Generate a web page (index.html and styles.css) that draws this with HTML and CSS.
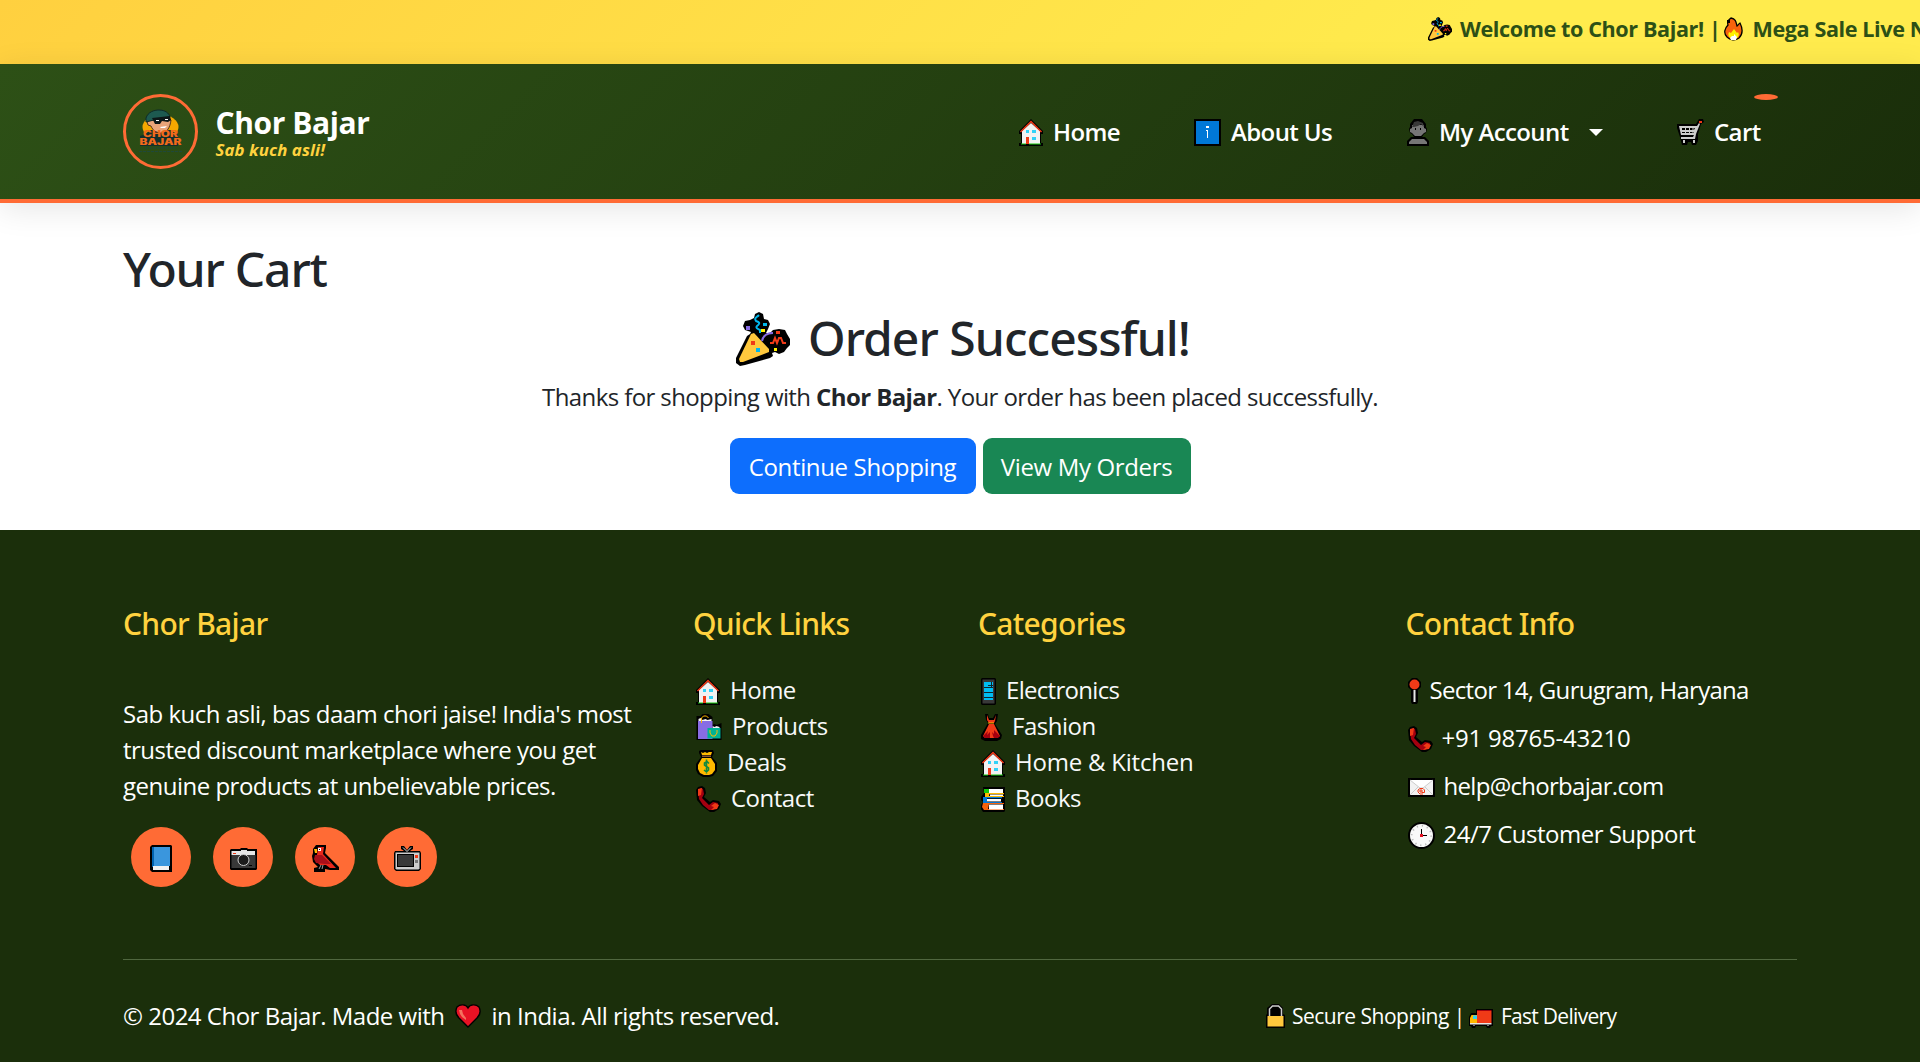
FILE: index.html
```
<!DOCTYPE html>
<html lang="en">
<head>
<meta charset="utf-8">
<title>Chor Bajar - Your Cart</title>
<link rel="stylesheet" href="styles.css">
</head>
<body>
<svg class="sprite" aria-hidden="true">
  <symbol id="party" viewBox="0 0 54 54">
    <path fill="#000" d="M14 8l4-2 1-4 4-2 4 2 1 5 4 1 2 4-2 5-2 4 4 0 3-3 6-1 6 1 2 4 3 5 1 5-4 4-3 4-5 2-4-2-3 1 1 3-3 2L9 53l-5 1-4-3 0-5L11 24l3-2 1-2-6-2-2-4 2-5z"/>
    <path fill="#ffc83d" d="M15 22l3-1 15 16 0 3L7 50l-3 0-1-3z"/>
    <path fill="none" stroke="#00b7eb" stroke-width="2" d="M23 3c-3 3-5 3-3 6 3 1 5 2 1 5-2 2 1 3 3 4v3"/>
    <path fill="none" stroke="#886ce4" stroke-width="2" d="M26 29c1-5 5-8 11-8"/>
    <path fill="none" stroke="#f03a17" stroke-width="2" d="M34 31h3l2-5 2 5 2-5h2l2 5h3"/>
    <path fill="#886ce4" d="M10 14h4v4h-4z"/><path fill="#00b7eb" d="M27 11h4v3h-4zM20 36h4v4h-4z"/>
    <path fill="#f03a17" d="M15 29h4v4h-4zM40 19h4v3h-4z"/><path fill="#fff100" d="M25 17h4v3h-4zM38 36h3v3h-3z"/>
  </symbol>
  <symbol id="fire" viewBox="0 0 19 24">
    <path fill="#f7630c" stroke="#000" stroke-width="1.3" d="M7 1c5 1 5 4 6 8 1 0 1-2 3-3 3 6 3 11-1 15-4 3-9 2-12-1-4-4-2-9 1-12-1-3 0-5 3-7z"/>
    <path fill="#000" d="M3 3h3v3H3z"/>
    <path fill="#fff100" d="M10 12l3 4 1-1c2 3 0 7-4 7s-7-3-5-7l2 1z"/><path fill="#fff" d="M10 17l3 3-1 3H7l-1-2 2-2h2z"/>
  </symbol>
  <symbol id="house" viewBox="0 0 24 27">
    <path d="M12 0l12 12v3h-2v9h2v3H0v-3h2v-9H0v-3z"/>
    <path fill="#f2f2f2" d="M3 12l9-8 9 8v13H3z"/>
    <path fill="none" stroke="#f03a17" stroke-width="1.5" d="M1.500 13L12 2.500 22.500 13"/>
    <path fill="#31d2f7" d="M7 11h3v3H7zM13 11h4v3h-4zM13 18h4v3h-4z"/>
    <path fill="#f03a17" d="M7 18h3v7H7z"/><path fill="#16c60c" d="M2 24.500h5v1H2zM10 24.500h12v1H10z"/>
  </symbol>
  <symbol id="info" viewBox="0 0 27 27">
    <path d="M0 0h27v27H0z"/><path fill="#0078d7" d="M2 2h23v23H2z"/>
    <path fill="#fff" d="M12 7h3v2h-3zM12 11h2v8h-1v-7h-1z"/>
  </symbol>
  <symbol id="person" viewBox="0 0 22 27">
    <path d="M7 0h8l4 5v3l1 2-1 4-2 1-2 3h3l4 4v5H0v-5l4-4h3l-2-3-2-1-1-4 1-2V5z"/>
    <path fill="#767676" d="M5 6h12v3l2 1v3l-2 1-3 3H8l-3-3-2-1v-3l2-1zM5 20h12l3 3v2H2v-2z"/>
    <path fill="#383838" d="M5 8l2-5 4-1 5 2 1 4-3-3-3 2-4 1z"/><path d="M8 9h1v2H8zM13 9h1v2h-1z"/>
  </symbol>
  <symbol id="cart" viewBox="0 0 27 27">
    <path d="M0 5h19l3-5h4l1 3-3 2-3 10v7l-2 4h-4l-1-3h-3l-1 3H5l-1-4-1-4-1-3L0 9z"/>
    <path fill="#ccc" d="M2 7h18l2-3 1 1-4 10-1 5H4v-2h12l1-2H4z"/>
    <path d="M5 9h13l-1 2H5zM5 13h12v1H5z"/><path fill="#ccc" d="M8 8h1v7H8zM12 8h1v7h-1zM15.500 8h1v7h-1z"/>
    <path fill="#f03a17" d="M22 2h3v2h-3z"/><path fill="#ccc" d="M6 21h2v3H6zM16 21h2v3h-2z"/>
  </symbol>
  <symbol id="bags" viewBox="0 0 25 26">
    <path d="M0 2h4l2-2h6l4 3v8l2-1 2 1 5-2v17H0z"/>
    <path fill="#f2f2f2" d="M2 5l2-1 2 2 3-1 2 1 4-1v3H2zM16 12l2 1 2-1 3 1v2h-7z"/>
    <path fill="#886ce4" d="M1.500 7H16v18H1.500z"/><path fill="#00b294" d="M11 14h13v10.500H11z"/>
    <path fill="none" stroke="#ffb900" d="M5 9V4l2-2h3l2 2M13.500 16v3l2 3h3l2-3v-3"/>
  </symbol>
  <symbol id="money" viewBox="0 0 21 27">
    <path d="M3 1l2-1h12l1 3-2 4 5 6v8l-4 5-4 1H7l-5-3-2-4v-6l5-7-2-4z"/>
    <path fill="#ffb900" d="M5 2l2 1 2-1 2 1 2-1 3 0-1 3H6zM6 8h9l4 6v6l-3 4-3 1H8l-4-2-2-4v-4z"/>
    <path fill="#8e562e" d="M6 5.500h9V7H6z"/>
    <path fill="none" stroke="#10893e" stroke-width="1.600" d="M13 13.500l-2-2-2.500 1.500v2l4 3v2L10.500 22 8 20M10.500 9.500v14"/>
  </symbol>
  <symbol id="phone" viewBox="0 0 25 26">
    <path d="M2 1l4-1 3 2 1 5-2 4 6 5 3-2 6 1 2 3-2 5-5 3h-4L6 20 1 14 0 4z"/>
    <path fill="#a4000f" d="M2 4l3-2 2 1 1 5-2 4 7 7 4-3 5 1-1 4-4 3h-4L7 19 3 13z"/>
    <path fill="#f03a17" d="M2 3l4-1-1 7-3 1zM15 20l4-3 4 2-2 4-6 1 3-3z"/>
  </symbol>
  <symbol id="mobile" viewBox="0 0 15 27">
    <path d="M1 0h13l1 1v25l-1 1H1l-1-1V1z"/><path fill="#383838" d="M1.500 1.500h12v24h-12z"/>
    <path fill="#00bcf2" d="M3 4h9v18H3z"/><path stroke="#10252c" d="M3 9.500h9M3 14.500h9M3 19.500h9M7 7.500h5M10.500 4v5"/>
  </symbol>
  <symbol id="dress" viewBox="0 0 21 27">
    <path d="M4 0h3l1 4h4l2-4h3l-1 7-2 3 7 11-1 4-4 2H4l-4-2v-4L7 9 5 6z"/>
    <path fill="#f03a17" d="M6 1l2 5h5l2-5-1 6-1 2H8L6 6zM8 10h5l6 12-3 2H4l-2-2z"/>
    <path fill="#a4000f" d="M2 22l5-5-1 4 3-3v6H4zM11 18l2 2 0-4 6 6-2 2h-4l-1-2z"/><path fill="#ffb900" d="M7 8.500h6v1H7z"/>
  </symbol>
  <symbol id="books" viewBox="0 0 24 25">
    <path d="M2 0h22v24l-1 1H2l-2-3v-4l2-3-2-2v-3l3-4z"/>
    <path fill="#16c60c" d="M3 2h18v1H8v3H3z"/><path fill="#fff" d="M8 2h14v4H8z"/>
    <path fill="#ffb900" d="M4 6h19v1.300H8V9h15v1H4z"/><path fill="#fff" d="M9 7.500h13V9H9z"/>
    <path fill="#0078d7" d="M2 10h19v1.300H6V15h15v1H2z"/><path fill="#fff" d="M6 12h14v2.500H6z"/>
    <path fill="#f7630c" d="M2 16h21v1H8l-1 5 16 0v1H3l-2-3z"/><path fill="#fff" d="M8 17.500h14v5H8z"/>
  </symbol>
  <symbol id="pin" viewBox="0 0 13 27">
    <path d="M4 0h5l4 4v5l-3 3v12l-1 2H4l-1-2V12L0 9V4z"/><circle cx="6.500" cy="6.500" r="5" fill="#f03a17"/><path fill="#e6e6e6" d="M5.500 12h2v12h-2z"/>
  </symbol>
  <symbol id="mail" viewBox="0 0 27 19">
    <path d="M0 0h27v19H0z"/><path fill="#f2f2f2" d="M2 2h23v15H2z"/>
    <path fill="#fff" stroke="#ccc" d="M2 2l10 8h3L25 2M2 17l8-8M25 17l-8-8"/>
    <path fill="none" stroke="#f03a17" d="M15 16h-3l-2-2v-2l2-1.500h3l1.500 1.500v2.500H14v-2.500h-2v2h2"/>
  </symbol>
  <symbol id="clock" viewBox="0 0 27 27">
    <circle cx="13.500" cy="13.500" r="12.500" fill="#f9f9f9" stroke="#000" stroke-width="2"/>
    <circle cx="13.500" cy="13.500" r="9.800" fill="none" stroke="#bbb" stroke-width="1.800" stroke-dasharray="1.300 3.830"/>
    <path fill="none" stroke="#000" d="M13.500 7v6.500H19"/><path fill="#e81224" d="M12 12h3v3h-3z"/>
  </symbol>
  <symbol id="book" viewBox="0 0 22 27">
    <path d="M2 0h19l1 1v26H2l-2-2V2z"/><path fill="#0063b1" d="M2 2h2v20H2z"/><path fill="#3a96dd" d="M4 2h16v19H4z"/><path fill="#f2f2f2" d="M3 21h16v4H3z"/>
  </symbol>
  <symbol id="camera" viewBox="0 0 27 22">
    <path d="M1 1h9l1-1h6l1 1h9v20l-1 1H1l-1-1V2z"/><path fill="#e6e6e6" d="M1.500 3H11V2h6v1h8v4h-23.500z"/><path fill="#383838" d="M1.500 7h24v13h-24z"/>
    <circle cx="13.500" cy="12" r="5.500" fill="#1b1b1b" stroke="#ccc"/><path fill="#f03a17" d="M3 5h3v1H3z"/><path fill="#000" d="M19 17h3v1h-3z"/>
  </symbol>
  <symbol id="bird" viewBox="0 0 27 27">
    <path d="M4 0h10v3l-1 5 14 14v3h-9l-5-1v3H2v-4l4-1-5-5-1-6 1-3V4z"/>
    <path fill="#e8291c" d="M6 2h6l-1 7 13 14h-6l-4-3H8l-4-4 1-6z"/><path fill="#a80f1a" d="M3 10l7 0 9 9h-6L4 18l-2-4z"/>
    <path fill="#ffb900" d="M2 4h3v4L3 8z"/><path fill="#fff" d="M6 3h3v3H6z"/><path d="M7 4h1v1H7z"/><path stroke="#999" d="M7 24l2-4M10 24l1-4"/>
  </symbol>
  <symbol id="tv" viewBox="0 0 27 25">
    <path d="M7 0h3l3 4 3-4h3v3l-3 2h10l1 2v16l-2 2H2l-2-2V7l1-2h9L7 3z"/>
    <path fill="none" stroke="#ddd" d="M9 1.500l4 4 4-4"/><path fill="#ccc" d="M1.500 6.500h24v16l-1 1h-22l-1-1z"/>
    <path fill="#000" d="M3 8h17v13H3z"/><path fill="#383838" d="M4 9h15v11H4z"/><path fill="#f03a17" d="M21 9h3v3h-3z"/><path fill="#767676" d="M21 14h3v3h-3z"/>
  </symbol>
  <symbol id="heart" viewBox="0 0 26 24">
    <path fill="#e81224" stroke="#000" stroke-width="1.400" d="M13 4c2-4 8-4 11-1 2 4 1 8-2 11l-9 9-9-9C1 11 0 7 2 3c3-3 9-3 11 1z"/><path fill="#f4725e" d="M4 6l3 0 1 4 3 4v2l-4-3-2-3z"/>
  </symbol>
  <symbol id="lock" viewBox="0 0 19 24">
    <path d="M6 0h7l4 4v6l2 1v13H0V11l1-1V4z"/><path fill="none" stroke="#ccc" stroke-width="1.500" d="M3.500 12V5l3-3h6l3 3v7"/><path fill="#ffc83d" d="M1.500 12h16v10.500h-16z"/>
  </symbol>
  <symbol id="truck" viewBox="0 0 24 19">
    <path d="M7 0h17v17h-2l-1 2h-3l-1-2H7l-1 2H3l-1-2H0V8l2-4h5z"/><path fill="#f03a17" d="M8 2h14.500v12H8z"/><path fill="#a4000f" d="M8 1h14.500v1H8z"/>
    <path fill="#ffb900" d="M2.500 6H8v8H1V9z"/><path fill="#31d2f7" d="M4 6.500h4V10H4z"/><path fill="#e6e6e6" d="M1 14h21.500v1.500H1z"/><path fill="#767676" d="M4 15h2v2H4zM18 15h2v2h-2z"/>
  </symbol>
</svg>

<div class="ticker">
  <svg width="24" height="24"><use href="#party"/></svg>
  <span class="welcome">Welcome to Chor Bajar! |</span>
  <svg width="19" height="24"><use href="#fire"/></svg>
  <span class="sale">Mega Sale Live Now!</span>
</div>

<header class="navbar">
  <div class="container nav-row">
    <a class="brand">
      <span class="logo">
        <svg width="46" height="46" viewBox="0 0 46 46">
          <ellipse cx="22.500" cy="18" rx="18" ry="12.500" fill="#f5a800"/>
          <path fill="#12302c" d="M5 26l8-5h20l7 5v11H2V27z"/>
          <path fill="#eaa57a" stroke="#2b1a12" stroke-width=".8" d="M12 11l-3 1 1 4 3 1c2 5 6 7 11 7 5-1 8-5 9-13z"/>
          <path fill="#1d5a50" stroke="#0e2b2a" d="M8 9c2-6 8-8 13-8 6 0 10 3 11 7l-12 2-12 3z"/>
          <path fill="#0d1717" d="M14 9l18-2 1 4-3 2-6-1-2 3h-5z"/>
          <path fill="#fff" d="M18 11h3v1h-3zM27 10h3v1h-3zM22 18l7-1-2 2h-4z"/>
          <text class="logo-text" x="5" y="28" textLength="35" lengthAdjust="spacingAndGlyphs">CHOR</text>
          <text class="logo-text" x="1.500" y="35.500" textLength="42" lengthAdjust="spacingAndGlyphs">BAJAR</text>
          <path stroke="#1f483a" stroke-dasharray="3 1" d="M7 39h30M1 42.500h43"/>
        </svg>
      </span>
      <span class="brand-text">
        <strong>Chor Bajar</strong>
        <em>Sab kuch asli!</em>
      </span>
    </a>
    <nav class="menu">
      <a><svg width="24" height="27"><use href="#house"/></svg>Home</a>
      <a><svg width="27" height="27"><use href="#info"/></svg>About Us</a>
      <a><svg width="22" height="27"><use href="#person"/></svg>My Account<i class="caret"></i></a>
      <a><svg width="27" height="27"><use href="#cart"/></svg>Cart<b class="badge"></b></a>
    </nav>
  </div>
</header>

<main class="container">
  <h1>Your Cart</h1>
  <section class="success">
    <h2><svg width="54" height="54"><use href="#party"/></svg>Order Successful!</h2>
    <p>Thanks for shopping with <strong>Chor Bajar</strong>. Your order has been placed successfully.</p>
    <div class="actions">
      <a class="btn primary">Continue Shopping</a>
      <a class="btn green">View My Orders</a>
    </div>
  </section>
</main>

<footer>
  <div class="container">
    <div class="columns">
      <section>
        <h5>Chor Bajar</h5>
        <p>Sab kuch asli, bas daam chori jaise! India's most trusted discount marketplace where you get genuine products at unbelievable prices.</p>
        <div class="social">
          <a><svg width="22" height="27"><use href="#book"/></svg></a>
          <a><svg width="27" height="22"><use href="#camera"/></svg></a>
          <a><svg width="27" height="27"><use href="#bird"/></svg></a>
          <a><svg width="27" height="25"><use href="#tv"/></svg></a>
        </div>
      </section>
      <section>
        <h5>Quick Links</h5>
        <ul>
          <li><svg width="24" height="27"><use href="#house"/></svg>Home</li>
          <li><svg width="26" height="26"><use href="#bags"/></svg>Products</li>
          <li><svg width="21" height="27"><use href="#money"/></svg>Deals</li>
          <li><svg width="25" height="26"><use href="#phone"/></svg>Contact</li>
        </ul>
      </section>
      <section>
        <h5>Categories</h5>
        <ul>
          <li class="tight"><svg width="15" height="27"><use href="#mobile"/></svg>Electronics</li>
          <li><svg width="21" height="27"><use href="#dress"/></svg>Fashion</li>
          <li class="loose"><svg width="24" height="27"><use href="#house"/></svg>Home &amp; Kitchen</li>
          <li><svg width="24" height="25"><use href="#books"/></svg>Books</li>
        </ul>
      </section>
      <section>
        <h5>Contact Info</h5>
        <ul class="contact">
          <li class="tight"><svg width="13" height="27"><use href="#pin"/></svg>Sector 14, Gurugram, Haryana</li>
          <li class="loose"><svg width="25" height="26"><use href="#phone"/></svg>+91 98765-43210</li>
          <li class="tight"><svg width="27" height="19"><use href="#mail"/></svg>help@chorbajar.com</li>
          <li><svg width="27" height="27"><use href="#clock"/></svg>24/7 Customer Support</li>
        </ul>
      </section>
    </div>
    <div class="bottom">
      <div class="copy">© 2024 Chor Bajar. Made with <svg width="26" height="24"><use href="#heart"/></svg>in India. All rights reserved.</div>
      <div class="perks">
        <svg width="19" height="24"><use href="#lock"/></svg><span>Secure Shopping |</span>
        <svg class="truck" width="24" height="19"><use href="#truck"/></svg><span class="fast">Fast Delivery</span>
      </div>
    </div>
  </div>
</footer>
</body>
</html>
```
FILE: styles.css
```
* { box-sizing: border-box; }

body {
  margin: 0;
  height: 1062px;
  overflow: hidden;
  display: flex;
  flex-direction: column;
  background: #fff;
  color: #212529;
  font: 400 24px/36px "Open Sans", "Noto Sans", sans-serif;
  letter-spacing: -0.5px;
}

h1, h2, h5, p, ul { margin: 0; padding: 0; }
h1, h2, h5 { font-family: "Noto Sans", "Open Sans", sans-serif; font-weight: 500; }
ul { list-style: none; }
svg { display: block; flex: none; }
.sprite { position: absolute; width: 0; height: 0; }
.container { width: 1674px; margin: 0 auto; }

/* Scrolling announcement */
.ticker {
  flex: none;
  display: flex;
  height: 64px;
  padding: 12px 0 0 1428px;
  overflow: hidden;
  white-space: nowrap;
  background: linear-gradient(135deg, #ffd03f, #ffeb4d 75%);
  color: #2d5016;
  font-size: 21.6px;
  font-weight: 700;
  line-height: 33px;
  letter-spacing: -0.4px;
}
.ticker svg { margin-top: 5px; }
.welcome { margin-left: 8px; }
.ticker .welcome + svg { margin-left: 4px; }
.sale { margin-left: 9px; }

/* Header */
.navbar {
  flex: none;
  position: relative;
  height: 139px;
  border-bottom: 4px solid #ff6b35;
  background: linear-gradient(135deg, #2d5016, #1a2e0a);
  box-shadow: 0 6px 30px rgba(0, 0, 0, .1);
  color: #fff;
}
.nav-row { display: flex; justify-content: space-between; align-items: center; height: 135px; }
.brand { display: flex; align-items: center; gap: 17.5px; }
.logo {
  display: grid;
  place-items: center;
  width: 75px;
  height: 75px;
  border: 3px solid #ff6b35;
  border-radius: 50%;
}
.logo-text {
  fill: #f26a1b;
  font: 900 8.5px "Inter", sans-serif;
  letter-spacing: 0;
}
.brand-text { display: flex; flex-direction: column; padding-top: 5px; }
.brand-text strong { font-size: 30px; line-height: 34px; letter-spacing: -0.4px; }
.brand-text em { margin-top: -2px; color: #ffd23f; font-size: 16.8px; font-weight: 700; line-height: 24px; letter-spacing: .1px; }
.menu { display: grid; grid-template-columns: 175px 213px 270px 120px; font-weight: 600; letter-spacing: -0.6px; }
.menu a { position: relative; display: flex; align-items: center; gap: 10px; }
.menu svg { margin-top: 2px; }
.caret {
  margin: 1px 0 0 10px;
  border: solid transparent;
  border-width: 7px 7px 0;
  border-top-color: #fff;
}
.badge {
  position: absolute;
  left: 77px;
  top: -20px;
  width: 24px;
  height: 6px;
  border-radius: 50%;
  background: #ff6b35;
}

/* Order confirmation */
main { flex: none; height: 327px; padding-top: 37px; }
h1, h2 { font-size: 48px; line-height: 58px; }
h1 { letter-spacing: -1.2px; }
h2 { display: flex; justify-content: center; gap: 18px; margin-top: 11px; padding-left: 6px; letter-spacing: -0.95px; }
h2 svg { margin-top: 3px; }
.success { text-align: center; }
.success p { margin-top: 12px; letter-spacing: -0.6px; }
.actions { display: flex; justify-content: center; gap: 7px; margin-top: 23px; }
.btn {
  width: 246px;
  height: 56px;
  padding-top: 11px;
  border-radius: 9px;
  background: #0d6efd;
  color: #fff;
  letter-spacing: -0.35px;
}
.btn.green { width: 208px; background: #198754; }

/* Footer */
footer { flex: 1; padding-top: 76px; background: #1b2f0b; color: #fff; }
.columns { display: grid; grid-template-columns: 570px 285px 427.5px 1fr; height: 353px; }
h5 { margin-bottom: 30px; color: #ffd23f; font-size: 30px; line-height: 36px; letter-spacing: -0.7px; }
.columns p { width: 534px; margin-top: 54px; }
.social { display: flex; gap: 22px; margin: 23px 0 0 8px; }
.social a { display: grid; place-items: center; width: 60px; height: 60px; border-radius: 50%; background: #ff6b35; }
.social svg { margin-top: 3px; }
li { display: flex; align-items: center; gap: 10px; height: 36px; padding-left: 3px; color: #f8f9fa; }
li svg { margin-top: 2px; }
.contact li { gap: 9px; margin-bottom: 12px; padding-left: 2px; color: #fff; }
.tight { letter-spacing: -0.7px; }
.loose { letter-spacing: -0.22px; }
.bottom { display: grid; grid-template-columns: 1143px 1fr; border-top: 1px solid #50673f; padding-top: 37px; }
.copy, .perks { display: flex; align-items: center; }
.copy svg { margin: 0 10px 0 11px; }
.perks { height: 38px; font-size: 21px; letter-spacing: -0.5px; }
.perks span { margin-left: 7px; }
.perks .truck { margin: 5px 0 0 4px; }
.perks .fast { margin-left: 8px; letter-spacing: -0.7px; }
```
